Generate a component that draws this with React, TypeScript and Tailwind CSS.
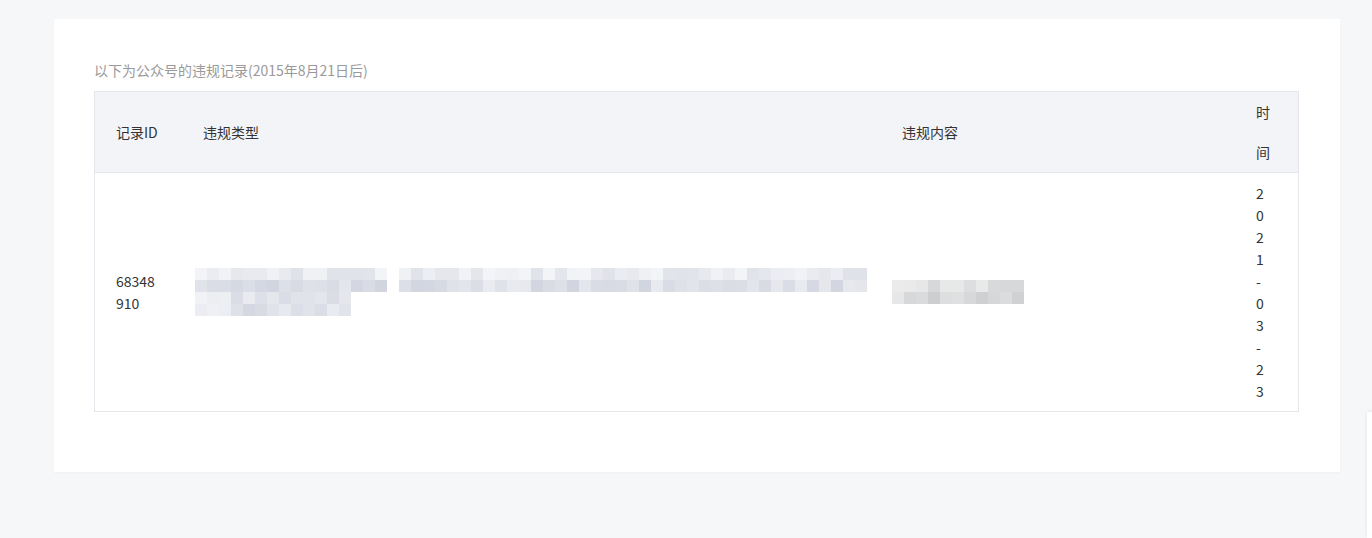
import React from "react";

function rnd(seed: number) {
  const x = Math.sin(seed * 9301 + 49297) * 233280;
  return x - Math.floor(x);
}

function mix(a: number[], b: number[], t: number) {
  return `rgb(${a.map((v, i) => Math.round(v + (b[i] - v) * t)).join(",")})`;
}

const LIGHT = [243, 244, 247];
const DARK = [203, 207, 219];
const GLIGHT = [236, 236, 236];
const GDARK = [200, 202, 205];

function BlockRow({
  count,
  seed,
  base,
  light,
  dark,
  gapAt = [],
  fadeStart = 0,
}: {
  count: number;
  seed: number;
  base: number;
  light: number[];
  dark: number[];
  gapAt?: number[];
  fadeStart?: number;
}) {
  const cells = [];
  for (let i = 0; i < count; i++) {
    const r = rnd(seed + i * 7.13);
    let t = Math.min(1, Math.max(0, base + (r - 0.5) * 0.6));
    if (i < fadeStart) t = t * 0.25;
    const bg = gapAt.includes(i) ? "#ffffff" : mix(light, dark, t);
    cells.push(<div key={i} className="h-[12px] w-[12px] shrink-0" style={{ background: bg }} />);
  }
  return <div className="flex">{cells}</div>;
}

export default function App() {
  const time = "2021-03-23".split("");
  return (
    <div
      className="relative min-h-[538px] w-full bg-[#f6f7f9] pt-[19px] pl-[54px]"
      style={{ fontFamily: '"Noto Sans CJK SC", "Noto Sans", sans-serif' }}
    >
      <div className="w-[1286px] bg-white pt-[40px] pl-[40px] pr-[41px] pb-[60px] shadow-[0_1px_2px_rgba(0,0,0,0.03)]">
        <div className="mb-[10px] text-[14px] leading-[22px] text-[#9a9a9a]">
          以下为公众号的违规记录(2015年8月21日后)
        </div>
        <div className="w-[1205px] border border-[#e4e6eb] text-[14px] text-[#333333]">
          <div className="grid grid-cols-[87px_699px_354px_63px] border-b border-[#e4e6eb] bg-[#f3f4f8] leading-[40px]">
            <div className="flex h-[80px] items-center pl-[21px]">记录ID</div>
            <div className="flex h-[80px] items-center pl-[21px]">违规类型</div>
            <div className="flex h-[80px] items-center pl-[21px]">违规内容</div>
            <div className="flex h-[80px] items-center pl-[21px] pr-[28px] break-all">时间</div>
          </div>
          <div className="grid grid-cols-[87px_699px_354px_63px] leading-[22px]">
            <div className="flex items-center pl-[21px] pr-[22px] py-[9px] break-all">68348910</div>
            <div className="flex items-center pl-[21px] py-[9px]">
              <div className="-ml-[8px] flex flex-col">
                <BlockRow count={56} seed={1} base={0.2} light={LIGHT} dark={DARK} gapAt={[16]} />
                <BlockRow count={56} seed={2} base={0.55} light={LIGHT} dark={DARK} gapAt={[16]} />
                <div>
                  <BlockRow count={13} seed={3} base={0.45} light={LIGHT} dark={DARK} fadeStart={3} />
                  <BlockRow count={13} seed={4} base={0.5} light={LIGHT} dark={DARK} fadeStart={3} />
                </div>
              </div>
            </div>
            <div className="flex items-center pl-[21px] py-[9px]">
              <div className="-ml-[10px] flex flex-col">
                <BlockRow count={11} seed={5} base={0.35} light={GLIGHT} dark={GDARK} fadeStart={1} />
                <BlockRow count={11} seed={6} base={0.6} light={GLIGHT} dark={GDARK} fadeStart={1} />
              </div>
            </div>
            <div className="flex flex-col pl-[21px] pr-[28px] py-[9px]">
              {time.map((c, i) => (
                <div key={i}>{c}</div>
              ))}
            </div>
          </div>
        </div>
      </div>
      <div className="absolute left-[1367px] top-[412px] h-[126px] w-[10px] bg-white shadow-[0_0_4px_rgba(0,0,0,0.08)]" />
    </div>
  );
}
